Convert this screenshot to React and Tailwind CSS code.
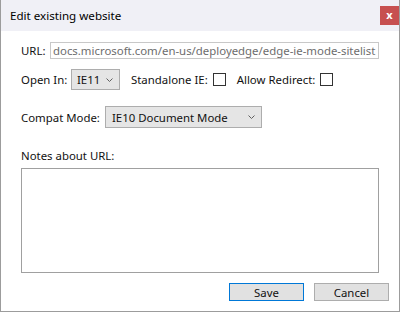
const font = { fontFamily: '"Noto Sans", "Liberation Sans", sans-serif' };

function Chevron() {
  return (
    <svg width="7" height="4" viewBox="0 0 7 4" className="shrink-0">
      <path d="M0.5 0.5 L3.5 3.5 L6.5 0.5" fill="none" stroke="#606060" strokeWidth="1" />
    </svg>
  );
}

function Checkbox() {
  return <div className="w-[13px] h-[13px] border border-[#333] bg-white" />;
}

export default function App() {
  return (
    <div className="w-[401px] h-[313px] bg-white text-[11.4px] text-[#111]" style={font}>
      <div className="w-[400px] h-[312px] border-l border-r border-b border-[#9c9c9c] flex flex-col">
        <div className="h-[31px] bg-[#f0f0f6] flex items-center justify-between pl-[9px]">
          <span className="text-[11.6px] text-black">Edit existing website</span>
          <div className="w-[19px] h-[19px] bg-[#c75050] text-white text-[11px] font-bold flex items-center justify-center leading-none pb-[2px]">
            x
          </div>
        </div>

        <div className="flex flex-col pl-[20px] pr-[20px]">
          <div className="flex items-center mt-[11px]">
            <span className="w-[29px]">URL:</span>
            <div className="w-[329px] h-[17px] border border-[#c8c8c8] flex items-center pl-[2px] text-[#6d6d6d] overflow-hidden whitespace-nowrap">
              docs.microsoft.com/en-us/deployedge/edge-ie-mode-sitelist
            </div>
          </div>

          <div className="flex items-center mt-[10px] h-[21px]">
            <span className="w-[50px]">Open In:</span>
            <div className="w-[49px] h-[21px] border border-[#adadad] bg-[#e5e5e5] flex items-center justify-between pl-[5px] pr-[6px]">
              <span>IE11</span>
              <Chevron />
            </div>
            <span className="ml-[11px]">Standalone IE:</span>
            <div className="ml-[5px]">
              <Checkbox />
            </div>
            <span className="ml-[11px]">Allow Redirect:</span>
            <div className="ml-[5px]">
              <Checkbox />
            </div>
          </div>

          <div className="flex items-center mt-[16px] h-[22px]">
            <span className="w-[84px]">Compat Mode:</span>
            <div className="w-[157px] h-[22px] border border-[#adadad] bg-[#e5e5e5] flex items-center justify-between pl-[6px] pr-[6px]">
              <span>IE10 Document Mode</span>
              <Chevron />
            </div>
          </div>

          <div className="mt-[20px] leading-[16px]">Notes about URL:</div>
          <div className="mt-[4px] w-[358px] h-[105px] border border-[#a0a0a0]" />

          <div className="flex justify-end gap-[10px] mt-[10px] mr-[-10px]">
            <div className="w-[75px] h-[18px] border border-[#0078d7] bg-[#e1e1e1] flex items-center justify-center">
              Save
            </div>
            <div className="w-[75px] h-[18px] border border-[#adadad] bg-[#e1e1e1] flex items-center justify-center">
              Cancel
            </div>
          </div>
        </div>
      </div>
    </div>
  );
}
